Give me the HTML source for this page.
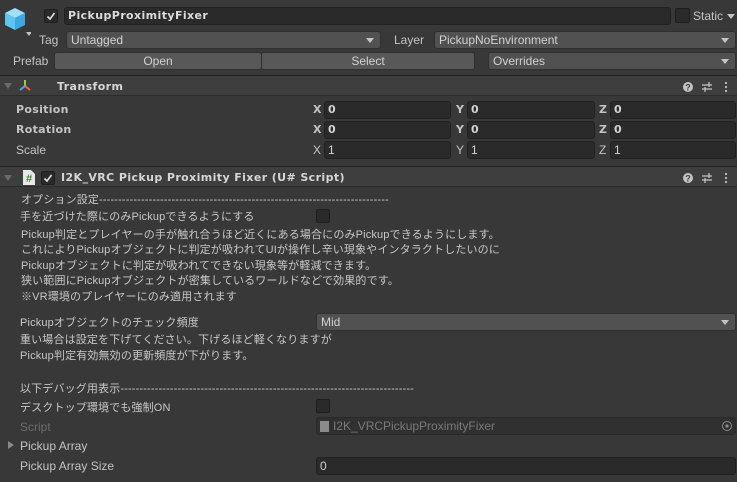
<!DOCTYPE html>
<html><head><meta charset="utf-8">
<style>
*{margin:0;padding:0;box-sizing:border-box}
body{width:737px;height:482px;background:#383838;overflow:hidden;position:relative;font-family:"Liberation Sans","Noto Sans CJK JP",sans-serif;font-size:12px;color:#c4c4c4}
.a{position:absolute;white-space:nowrap}
.f{position:absolute;background:#2a2a2a;border:1px solid #212121;border-radius:3px;height:18px;line-height:16px;padding-left:3px;color:#d2d2d2}
.d{position:absolute;background:#515151;border:1px solid #303030;border-radius:3px;height:18px;line-height:16px;padding-left:4px;color:#d2d2d2}
.d:after{content:"";position:absolute;right:6px;top:6px;border-left:4px solid transparent;border-right:4px solid transparent;border-top:5px solid #c4c4c4}
.b{position:absolute;background:#585858;border:1px solid #303030;border-radius:3px;height:18px;line-height:16px;text-align:center;color:#d2d2d2}
.hdr{position:absolute;left:0;width:737px;height:21px;background:#3e3e3e;border-top:1px solid #232323;border-bottom:1px solid #2c2c2c}
.cb{position:absolute;width:14px;height:14px;background:#2a2a2a;border:1px solid #1e1e1e;border-radius:2px}
.bold{font-weight:bold;font-family:"DejaVu Sans",sans-serif;font-size:11px}
.j{font-size:11px;font-family:"Liberation Sans","Noto Sans CJK JP",sans-serif;color:#c8c8c8;letter-spacing:0.15px}
</style></head><body>
<svg class="a" style="left:3px;top:7px" width="28" height="30" viewBox="0 0 28 30">
<polygon points="12,1 22,6 12,11 2,6" fill="#9fe0ff"/>
<polygon points="2,6 12,11 12,23 2,18" fill="#5ec4f2"/>
<polygon points="22,6 12,11 12,23 22,18" fill="#3ba8e0"/>
<polygon points="23,25 29,25 26,29" fill="#c4c4c4"/>
</svg>
<div class="cb" style="left:44px;top:9px"><svg width="12" height="12" viewBox="0 0 12 12" style="position:absolute;left:0;top:0"><path d="M2.5 6.5 L5 9 L9.5 3" stroke="#e0e0e0" stroke-width="1.6" fill="none"/></svg></div>
<div class="f bold" style="left:64px;top:7px;width:607px;color:#dcdcdc;letter-spacing:0.4px">PickupProximityFixer</div>
<div class="cb" style="left:675px;top:8px;width:15px;height:15px"></div>
<div class="a" style="left:693px;top:9px">Static</div>
<div class="a" style="left:727px;top:14px;border-left:4px solid transparent;border-right:4px solid transparent;border-top:5px solid #c4c4c4"></div>

<div class="a" style="left:39px;top:33px">Tag</div>
<div class="d" style="left:66px;top:31px;width:315px">Untagged</div>
<div class="a" style="left:394px;top:33px">Layer</div>
<div class="d" style="left:434px;top:31px;width:302px">PickupNoEnvironment</div>

<div class="a" style="left:13px;top:54px">Prefab</div>
<div class="b" style="left:54px;top:52px;width:208px">Open</div>
<div class="b" style="left:261px;top:52px;width:214px">Select</div>
<div class="d" style="left:488px;top:52px;width:248px">Overrides</div>

<div class="hdr" style="top:75px"></div>
<div class="a" style="left:4px;top:83px;border-left:4px solid transparent;border-right:4px solid transparent;border-top:6px solid #6a6a6a"></div>
<svg class="a" style="left:17px;top:78px" width="16" height="16" viewBox="0 0 16 16">
<path d="M8 2 V8" stroke="#8fd14f" stroke-width="2"/><path d="M8 8 L3 12" stroke="#4aa3ff" stroke-width="2"/><path d="M8 8 L13 12" stroke="#f0643c" stroke-width="2"/></svg>
<div class="a bold" style="left:57px;top:80px;color:#d6d6d6;letter-spacing:0.4px">Transform</div>
<svg class="a" style="left:682px;top:80px" width="50" height="14" viewBox="0 0 50 14">
<circle cx="6" cy="7" r="5" fill="#c4c4c4"/><text x="6" y="10.5" font-size="9" font-weight="bold" text-anchor="middle" fill="#3e3e3e" font-family="Liberation Sans">?</text>
<path d="M20 5 H30 M20 9 H30 M27 2 V7 M23 7 V12" stroke="#c4c4c4" stroke-width="1.3"/>
<circle cx="44" cy="3" r="1.1" fill="#c4c4c4"/><circle cx="44" cy="7" r="1.1" fill="#c4c4c4"/><circle cx="44" cy="11" r="1.1" fill="#c4c4c4"/></svg>

<div class="a bold" style="left:16px;top:103px;letter-spacing:0.3px">Position</div>
<div class="a bold" style="left:16px;top:123px;letter-spacing:0.3px">Rotation</div>
<div class="a" style="left:16px;top:143px">Scale</div>
<div class="a bold" style="left:313px;top:103px">X</div><div class="f bold" style="left:324px;top:101px;width:127px">0</div>
<div class="a bold" style="left:456px;top:103px">Y</div><div class="f bold" style="left:467px;top:101px;width:128px">0</div>
<div class="a bold" style="left:599px;top:103px">Z</div><div class="f bold" style="left:610px;top:101px;width:126px">0</div>
<div class="a bold" style="left:313px;top:123px">X</div><div class="f bold" style="left:324px;top:121px;width:127px">0</div>
<div class="a bold" style="left:456px;top:123px">Y</div><div class="f bold" style="left:467px;top:121px;width:128px">0</div>
<div class="a bold" style="left:599px;top:123px">Z</div><div class="f bold" style="left:610px;top:121px;width:126px">0</div>
<div class="a" style="left:313px;top:143px">X</div><div class="f" style="left:324px;top:141px;width:127px">1</div>
<div class="a" style="left:456px;top:143px">Y</div><div class="f" style="left:467px;top:141px;width:128px">1</div>
<div class="a" style="left:599px;top:143px">Z</div><div class="f" style="left:610px;top:141px;width:126px">1</div>

<div class="hdr" style="top:166px"></div>
<div class="a" style="left:4px;top:175px;border-left:4px solid transparent;border-right:4px solid transparent;border-top:6px solid #6a6a6a"></div>
<svg class="a" style="left:23px;top:170px" width="12" height="15" viewBox="0 0 12 15"><path d="M0 0 H8 L12 4 V15 H0 Z" fill="#e8e8e8"/><text x="6" y="12" font-size="11" font-weight="bold" text-anchor="middle" fill="#2e8b2e" font-family="Liberation Sans">#</text></svg>
<div class="cb" style="left:41px;top:171px"><svg width="12" height="12" viewBox="0 0 12 12" style="position:absolute;left:0;top:0"><path d="M2.5 6.5 L5 9 L9.5 3" stroke="#e0e0e0" stroke-width="1.6" fill="none"/></svg></div>
<div class="a bold" style="left:61px;top:171px;color:#d6d6d6;letter-spacing:0.4px">I2K_VRC Pickup Proximity Fixer (U# Script)</div>
<svg class="a" style="left:682px;top:171px" width="50" height="14" viewBox="0 0 50 14">
<circle cx="6" cy="7" r="5" fill="#c4c4c4"/><text x="6" y="10.5" font-size="9" font-weight="bold" text-anchor="middle" fill="#3e3e3e" font-family="Liberation Sans">?</text>
<path d="M20 5 H30 M20 9 H30 M27 2 V7 M23 7 V12" stroke="#c4c4c4" stroke-width="1.3"/>
<circle cx="44" cy="3" r="1.1" fill="#c4c4c4"/><circle cx="44" cy="7" r="1.1" fill="#c4c4c4"/><circle cx="44" cy="11" r="1.1" fill="#c4c4c4"/></svg>

<div class="a j" style="left:21px;top:191px">オプション設定----------------------------------------------------------------------------</div>
<div class="a j" style="left:20px;top:208px">手を近づけた際にのみPickupできるようにする</div>
<div class="cb" style="left:316px;top:209px"></div>
<div class="a j" style="left:21px;top:226px">Pickup判定とプレイヤーの手が触れ合うほど近くにある場合にのみPickupできるようにします。</div>
<div class="a j" style="left:21px;top:241px">これによりPickupオブジェクトに判定が吸われてUIが操作し辛い現象やインタラクトしたいのに</div>
<div class="a j" style="left:21px;top:257px">Pickupオブジェクトに判定が吸われてできない現象等が軽減できます。</div>
<div class="a j" style="left:21px;top:272px">狭い範囲にPickupオブジェクトが密集しているワールドなどで効果的です。</div>
<div class="a j" style="left:21px;top:288px">※VR環境のプレイヤーにのみ適用されます</div>

<div class="a j" style="left:20px;top:314px">Pickupオブジェクトのチェック頻度</div>
<div class="d" style="left:316px;top:313px;width:420px">Mid</div>
<div class="a j" style="left:20px;top:331px">重い場合は設定を下げてください。下げるほど軽くなりますが</div>
<div class="a j" style="left:20px;top:347px">Pickup判定有効無効の更新頻度が下がります。</div>

<div class="a j" style="left:20px;top:380px">以下デバッグ用表示-----------------------------------------------------------------------------</div>
<div class="a j" style="left:20px;top:399px">デスクトップ環境でも強制ON</div>
<div class="cb" style="left:316px;top:399px"></div>
<div class="a" style="left:20px;top:420px;color:#6c6c6c">Script</div>
<div class="f" style="left:316px;top:417px;width:420px;background:#303030;border-color:#2a2a2a;color:#7a7a7a;padding-left:16px">I2K_VRCPickupProximityFixer</div>
<div class="a" style="left:320px;top:421px;width:9px;height:11px;background:#8a8a8a"></div>
<svg class="a" style="left:721px;top:420px" width="12" height="12"><circle cx="6" cy="6" r="4.5" stroke="#8a8a8a" fill="none"/><circle cx="6" cy="6" r="1.6" fill="#8a8a8a"/></svg>
<div class="a" style="left:8px;top:441px;border-top:4px solid transparent;border-bottom:4px solid transparent;border-left:6px solid #8a8a8a"></div>
<div class="a" style="left:20px;top:439px">Pickup Array</div>
<div class="a" style="left:20px;top:459px">Pickup Array Size</div>
<div class="f" style="left:316px;top:457px;width:420px">0</div>
</body></html>
